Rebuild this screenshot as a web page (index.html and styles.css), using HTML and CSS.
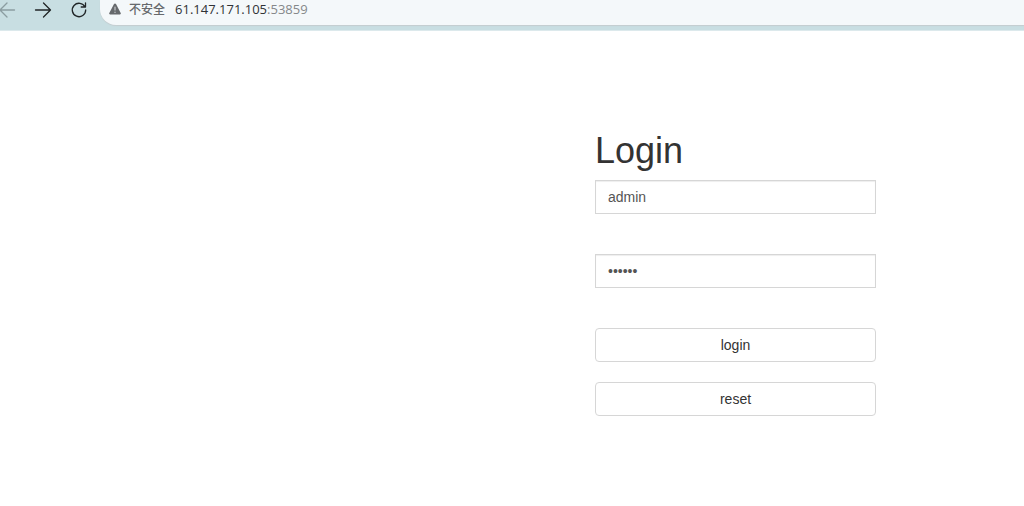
FILE: index.html
```html
<!DOCTYPE html>
<html lang="en">
<head>
<meta charset="utf-8">
<meta name="viewport" content="width=device-width, initial-scale=1">
<title>Login</title>
<link rel="stylesheet" href="styles.css">
</head>
<body>
<header class="toolbar">
  <nav class="nav">
    <button class="nav-button nav-button-muted" type="button" aria-label="Back">
      <svg class="icon" viewBox="0 0 18 18"><path d="M16.500 9H2M9 2 2 9l7 7"/></svg>
    </button>
    <button class="nav-button" type="button" aria-label="Forward">
      <svg class="icon" viewBox="0 0 18 18"><path d="M1.500 9h15M9.500 2l7 7-7 7"/></svg>
    </button>
    <button class="nav-button" type="button" aria-label="Reload">
      <svg class="icon" viewBox="0 0 18 18"><path d="M15 6A6.700 6.700 0 1 0 15.700 9M15.500 1.800V6h-4.300"/></svg>
    </button>
  </nav>
  <div class="address">
    <svg class="warning" viewBox="0 0 12 12"><path d="M5 1.100a1.100 1.100 0 0 1 2 0l4.700 8.900a1 1 0 0 1-.9 1.500H1.200A1 1 0 0 1 .3 10z" fill="#66696c"/><path d="M6 3.700v3.800M6 8.700v1.300" stroke="#d5dadc" stroke-width="1"/></svg>
    <span class="security" lang="zh-CN">不安全</span>
    <span class="url">61.147.171.105<span class="port">:53859</span></span>
  </div>
</header>
<main class="page">
  <form class="login">
    <h1 class="title">Login</h1>
    <input class="field" type="text" value="admin" aria-label="Username">
    <input class="field" type="password" value="123456" aria-label="Password">
    <button class="button" type="button">login</button>
    <button class="button" type="reset">reset</button>
  </form>
</main>
</body>
</html>
```
FILE: styles.css
```css
* {
  box-sizing: border-box;
}

body {
  margin: 0;
  background: #fff;
  color: #333;
  font: 14px/20px "Liberation Sans", Arial, sans-serif;
}

.toolbar {
  display: flex;
  align-items: flex-start;
  height: 31px;
  background: #c8dee2;
  border-bottom: 1px solid #dce9ec;
}

.nav {
  display: flex;
  flex: none;
  gap: 18px;
  margin-left: -2px;
  padding-right: 12px;
}

.nav-button {
  width: 18px;
  height: 20px;
  padding: 1px 0;
  border: 0;
  background: none;
  color: #202527;
}

.nav-button-muted {
  color: #8b9da1;
}

.icon {
  display: block;
  width: 18px;
  height: 18px;
  fill: none;
  stroke: currentColor;
  stroke-width: 1.3;
  stroke-linecap: round;
  stroke-linejoin: round;
}

.address {
  display: flex;
  flex: 1;
  align-items: center;
  height: 25px;
  padding: 0 0 8px 9px;
  background: #f4f8fa;
  border-bottom-left-radius: 16px;
  box-shadow: 0 1px 1px #c4cdd0;
}

.warning {
  width: 12px;
  height: 12px;
  margin-right: 8px;
}

.security {
  margin-right: 10px;
  color: #66696c;
  font: 500 12px/18px "Noto Sans CJK SC", sans-serif;
}

.url {
  color: #303336;
  font: 13px/18px "Open Sans", "Noto Sans", sans-serif;
}

.port {
  color: #85888a;
}

.page {
  display: grid;
  grid-template-columns: 595fr 281fr 148fr;
  padding: 99px 0 40px;
}

.login {
  grid-column: 2;
  display: flex;
  flex-direction: column;
}

.title {
  margin: 0 0 8px;
  font-size: 36px;
  font-weight: 500;
  line-height: 42px;
}

.field {
  width: 100%;
  height: 34px;
  margin: 0 0 40px;
  padding: 6px 12px;
  border: 1px solid #d6d6d6;
  border-radius: 0;
  background: #fff;
  box-shadow: inset 0 1px 1px rgba(0, 0, 0, 0.07);
  color: #555;
  font: inherit;
}

.button {
  width: 100%;
  height: 34px;
  margin: 0 0 20px;
  padding: 6px 12px;
  border: 1px solid #d6d6d6;
  border-radius: 4px;
  background: #fff;
  color: #333;
  font: inherit;
}
```
